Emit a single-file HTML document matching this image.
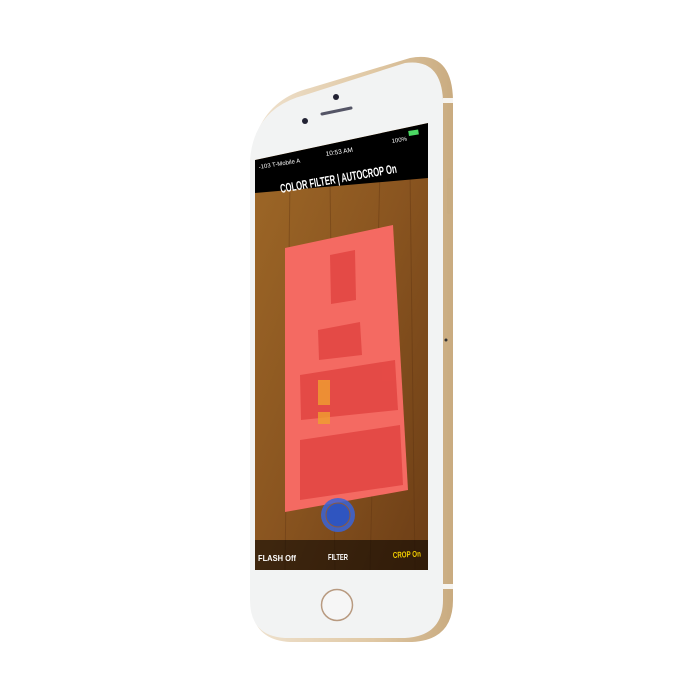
<!DOCTYPE html>
<html><head><style>
html,body{margin:0;padding:0;background:#fff;width:700px;height:700px;overflow:hidden}
</style></head><body>
<svg width="700" height="700" viewBox="0 0 700 700" xmlns="http://www.w3.org/2000/svg" font-family="Liberation Sans, sans-serif">
<defs>
<linearGradient id="gold" x1="0" x2="1"><stop offset="0" stop-color="#efe2cf"/><stop offset="0.6" stop-color="#e0c8a4"/><stop offset="1" stop-color="#c9ab80"/></linearGradient>
<linearGradient id="wood" x1="0" x2="1" y1="0" y2="1"><stop offset="0" stop-color="#a06a28"/><stop offset="0.5" stop-color="#8a5520"/><stop offset="1" stop-color="#6a3c15"/></linearGradient>
<clipPath id="scr"><polygon points="255,160 428,123 428,570 255,570"/></clipPath>
</defs>
<path d="M252,150 Q262,100 310,88 L410,58 Q452,50 453,100 L453,600 Q453,640 412,642 L290,642 Q251,640 251,600 Z" fill="url(#gold)"/>
<path d="M250,160 Q254,108 305,95 L405,63 Q441,58 443,100 L443,600 Q443,636 405,638 L285,638 Q250,636 250,600 Z" fill="#f2f3f3"/>
<rect x="447" y="178" width="5" height="36" rx="2" fill="#c8ab80"/>
<rect x="443" y="98" width="10" height="5" fill="#f6f4f0"/>
<rect x="443" y="584" width="10" height="5" fill="#f6f4f0"/>
<circle cx="336" cy="97" r="3" fill="#223"/>
<circle cx="305" cy="121" r="3" fill="#223"/>
<line x1="322" y1="114" x2="351" y2="108" stroke="#556" stroke-width="3" stroke-linecap="round"/>
<circle cx="446" cy="340" r="1.5" fill="#333"/>
<g clip-path="url(#scr)">
<rect x="250" y="100" width="185" height="480" fill="url(#wood)"/>
<g stroke="#5a3010" stroke-width="1" opacity="0.35">
<line x1="290" y1="180" x2="285" y2="570"/><line x1="330" y1="180" x2="335" y2="570"/><line x1="380" y1="170" x2="370" y2="570"/><line x1="410" y1="170" x2="415" y2="570"/>
</g>
<polygon points="255,160 428,123 428,178 255,193" fill="#000"/>
<polygon points="285,248 393,225 408,490 285,512" fill="#f46a62"/>
<g fill="#d83030" opacity="0.55">
<polygon points="330,255 355,250 356,300 331,304"/>
<polygon points="318,330 360,322 362,355 319,360"/>
<polygon points="300,375 395,360 398,410 301,420"/>
<polygon points="300,440 400,425 403,485 300,500"/>
</g>
<g fill="#f0a030" opacity="0.8"><rect x="318" y="380" width="12" height="25"/><rect x="318" y="412" width="12" height="12"/></g>
<rect x="255" y="540" width="173" height="30" fill="#000" opacity="0.55"/>
<circle cx="338" cy="515" r="17" fill="#3a64d8" opacity="0.85"/>
<circle cx="338" cy="515" r="12" fill="#2f55c0" stroke="#8a5a40" stroke-width="1"/>
<g fill="#fff">
<text transform="translate(259,169) rotate(-9)" font-size="6">-103 T-Mobile A</text>
<text transform="translate(326,156) rotate(-9)" font-size="6.5">10:53 AM</text>
<text transform="translate(392,143) rotate(-9)" font-size="6">100%</text>
<rect transform="translate(409,136) rotate(-9)" x="0" y="-5" width="10" height="5" fill="#4cd964"/>
<text transform="translate(281,193) rotate(-10)" font-size="12.5" font-weight="bold" textLength="118" lengthAdjust="spacingAndGlyphs">COLOR FILTER | AUTOCROP On</text>
</g>
<text x="258" y="561" font-size="8.5" font-weight="bold" fill="#fff" textLength="38" lengthAdjust="spacingAndGlyphs">FLASH Off</text>
<text x="328" y="560" font-size="8.5" font-weight="bold" fill="#fff" textLength="20" lengthAdjust="spacingAndGlyphs">FILTER</text>
<text transform="translate(393,558) rotate(-3)" font-size="8.5" font-weight="bold" fill="#f5d000" textLength="28" lengthAdjust="spacingAndGlyphs">CROP On</text>
</g>
<circle cx="337" cy="605" r="15.5" fill="#f6f6f6" stroke="#b89a80" stroke-width="1.5"/>
</svg>
</body></html>
